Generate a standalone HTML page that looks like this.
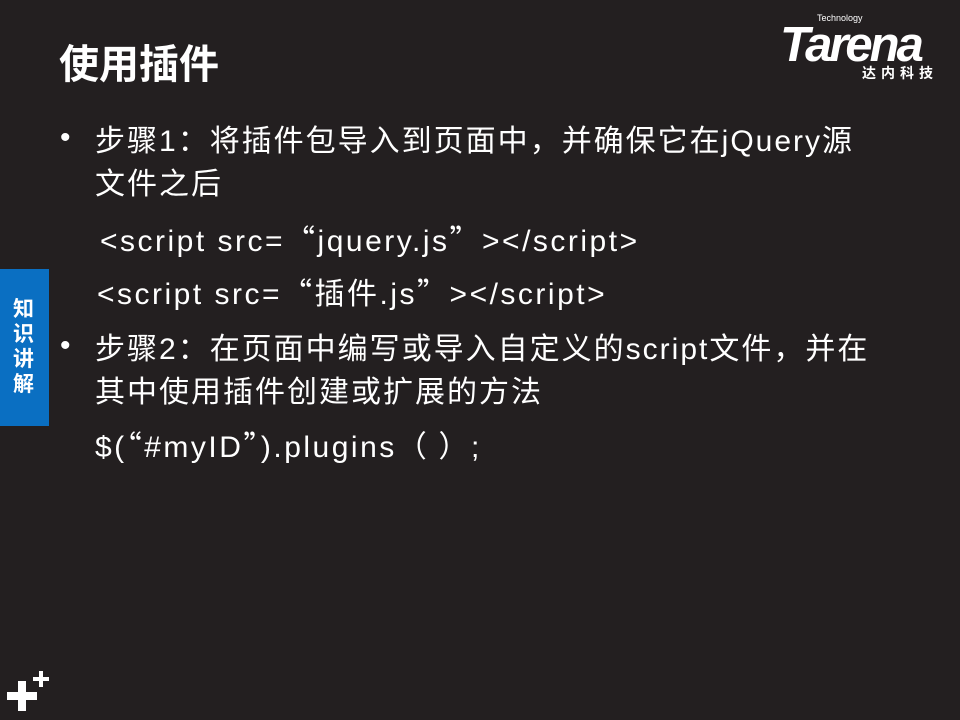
<!DOCTYPE html>
<html><head><meta charset="utf-8"><style>
body{margin:0;width:960px;height:720px;background:#231f20;position:relative;overflow:hidden;font-family:"Liberation Sans","Noto Sans CJK SC",sans-serif;color:#fff}
.t{position:absolute;white-space:nowrap}
.b{font-size:30px;line-height:34px;letter-spacing:2px}
.c{letter-spacing:2.5px}
.q{font-family:"Noto Sans CJK SC",sans-serif}
</style></head><body>
<div class="t" style="left:59px;top:40px;font-size:40px;font-weight:bold;line-height:50px">使用插件</div>
<div class="t" style="left:817px;top:13px;font-size:9px">Technology</div>
<div class="t" style="left:780px;top:17px;font-size:49px;font-weight:bold;font-style:italic;letter-spacing:-3px;line-height:56px">Tarena</div>
<div class="t" style="left:862px;top:63px;font-size:14px;font-weight:bold;letter-spacing:5px">达内科技</div>
<div style="position:absolute;left:0;top:269px;width:49px;height:157px;background:#0a6fc2"></div>
<div class="t" style="left:13px;top:297px;font-size:21px;font-weight:bold;line-height:25px;white-space:normal;width:24px">知识讲解</div>
<div class="t b" style="left:60px;top:121px">•</div>
<div class="t b" style="left:95px;top:121px">步骤1<span class="q">：</span>将插件包导入到页面中<span class="q">，</span>并确保它在jQuery源</div>
<div class="t b" style="left:95px;top:168px">文件之后</div>
<div class="t b c" style="left:100px;top:221px">&lt;script src=<span class="q">“</span>jquery.js<span class="q">”</span>&gt;&lt;/script&gt;</div>
<div class="t b c" style="left:97px;top:274px">&lt;script src=<span class="q">“</span>插件.js<span class="q">”</span>&gt;&lt;/script&gt;</div>
<div class="t b" style="left:60px;top:329px">•</div>
<div class="t b" style="left:95px;top:329px">步骤2<span class="q">：</span>在页面中编写或导入自定义的script文件<span class="q">，</span>并在</div>
<div class="t b" style="left:95px;top:376px">其中使用插件创建或扩展的方法</div>
<div class="t b c" style="left:95px;top:427px">$(<span class="q">“</span>#myID<span class="q">”</span>).plugins<span class="q">（ ）</span>;</div>
<div style="position:absolute;left:7px;top:692px;width:30px;height:8px;background:#fff"></div>
<div style="position:absolute;left:18px;top:681px;width:8px;height:30px;background:#fff"></div>
<div style="position:absolute;left:33px;top:677px;width:16px;height:4px;background:#fff"></div>
<div style="position:absolute;left:39px;top:671px;width:4px;height:16px;background:#fff"></div>
</body></html>
